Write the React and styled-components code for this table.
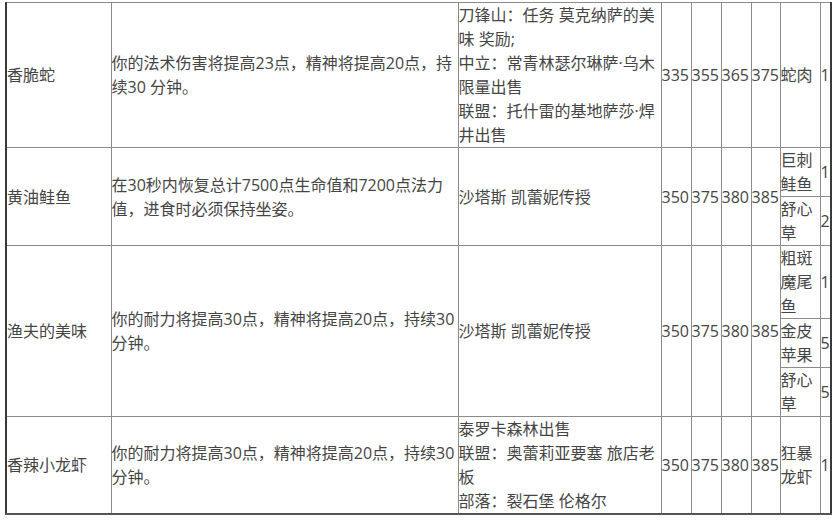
import React from "react";
import styled, { createGlobalStyle } from "styled-components";

const Global = createGlobalStyle`
  html, body { margin: 0; padding: 0; background: #fff; }
  body {
    font-family: "Open Sans", "Noto Sans CJK SC", sans-serif;
    color: #454545;
  }
`;

const Page = styled.div`
  padding: 2px 0 0 5px;
`;

const Table = styled.table`
  border-collapse: collapse;
  table-layout: fixed;
  width: 825px;
  border-left: 2px solid #3a3a3a;
  border-right: 2px solid #3a3a3a;
  border-bottom: 2px solid #555;
  font-size: 16px;
  line-height: 24px;
`;

const Cell = styled.td`
  border: 1px solid #8c8c8c;
  padding: 0;
  vertical-align: middle;
  text-align: left;
  white-space: ${(p) => (p.$nowrap ? "nowrap" : "normal")};
  overflow: visible;
  word-break: normal;
`;

const Line = styled.div``;

const widths = [105, 347, 203, 30, 30, 30, 29, 40, 11];

const data = [
  {
    name: "香脆蛇",
    desc: "你的法术伤害将提高23点，精神将提高20点，持续30 分钟。",
    source: [
      "刀锋山：任务 莫克纳萨的美味 奖励;",
      "中立：常青林瑟尔琳萨·乌木限量出售",
      "联盟：托什雷的基地萨莎·焊井出售",
    ],
    nums: ["335", "355", "365", "375"],
    mats: [["蛇肉", "1"]],
  },
  {
    name: "黄油鲑鱼",
    desc: "在30秒内恢复总计7500点生命值和7200点法力值，进食时必须保持坐姿。",
    source: ["沙塔斯 凯蕾妮传授"],
    nums: ["350", "375", "380", "385"],
    mats: [
      ["巨刺鲑鱼", "1"],
      ["舒心草", "2"],
    ],
  },
  {
    name: "渔夫的美味",
    desc: "你的耐力将提高30点，精神将提高20点，持续30分钟。",
    source: ["沙塔斯 凯蕾妮传授"],
    nums: ["350", "375", "380", "385"],
    mats: [
      ["粗斑魔尾鱼", "1"],
      ["金皮苹果", "5"],
      ["舒心草", "5"],
    ],
  },
  {
    name: "香辣小龙虾",
    desc: "你的耐力将提高30点，精神将提高20点，持续30分钟。",
    source: ["泰罗卡森林出售", "联盟：奥蕾莉亚要塞 旅店老板", "部落：裂石堡 伦格尔"],
    nums: ["350", "375", "380", "385"],
    mats: [["狂暴龙虾", "1"]],
  },
];

function Recipe({ r }) {
  const span = r.mats.length;
  const [first, ...rest] = r.mats;
  return (
    <>
      <tr>
        <Cell rowSpan={span}>{r.name}</Cell>
        <Cell rowSpan={span}>{r.desc}</Cell>
        <Cell rowSpan={span}>
          {r.source.map((s, i) => (
            <Line key={i}>{s}</Line>
          ))}
        </Cell>
        {r.nums.map((n, i) => (
          <Cell key={i} rowSpan={span} $nowrap>
            {n}
          </Cell>
        ))}
        <Cell>{first[0]}</Cell>
        <Cell $nowrap>{first[1]}</Cell>
      </tr>
      {rest.map((m, i) => (
        <tr key={i}>
          <Cell>{m[0]}</Cell>
          <Cell $nowrap>{m[1]}</Cell>
        </tr>
      ))}
    </>
  );
}

export default function App() {
  return (
    <Page>
      <Global />
      <Table>
        <colgroup>
          {widths.map((w, i) => (
            <col key={i} style={{ width: w }} />
          ))}
        </colgroup>
        <tbody>
          {data.map((r, i) => (
            <Recipe key={i} r={r} />
          ))}
        </tbody>
      </Table>
    </Page>
  );
}
